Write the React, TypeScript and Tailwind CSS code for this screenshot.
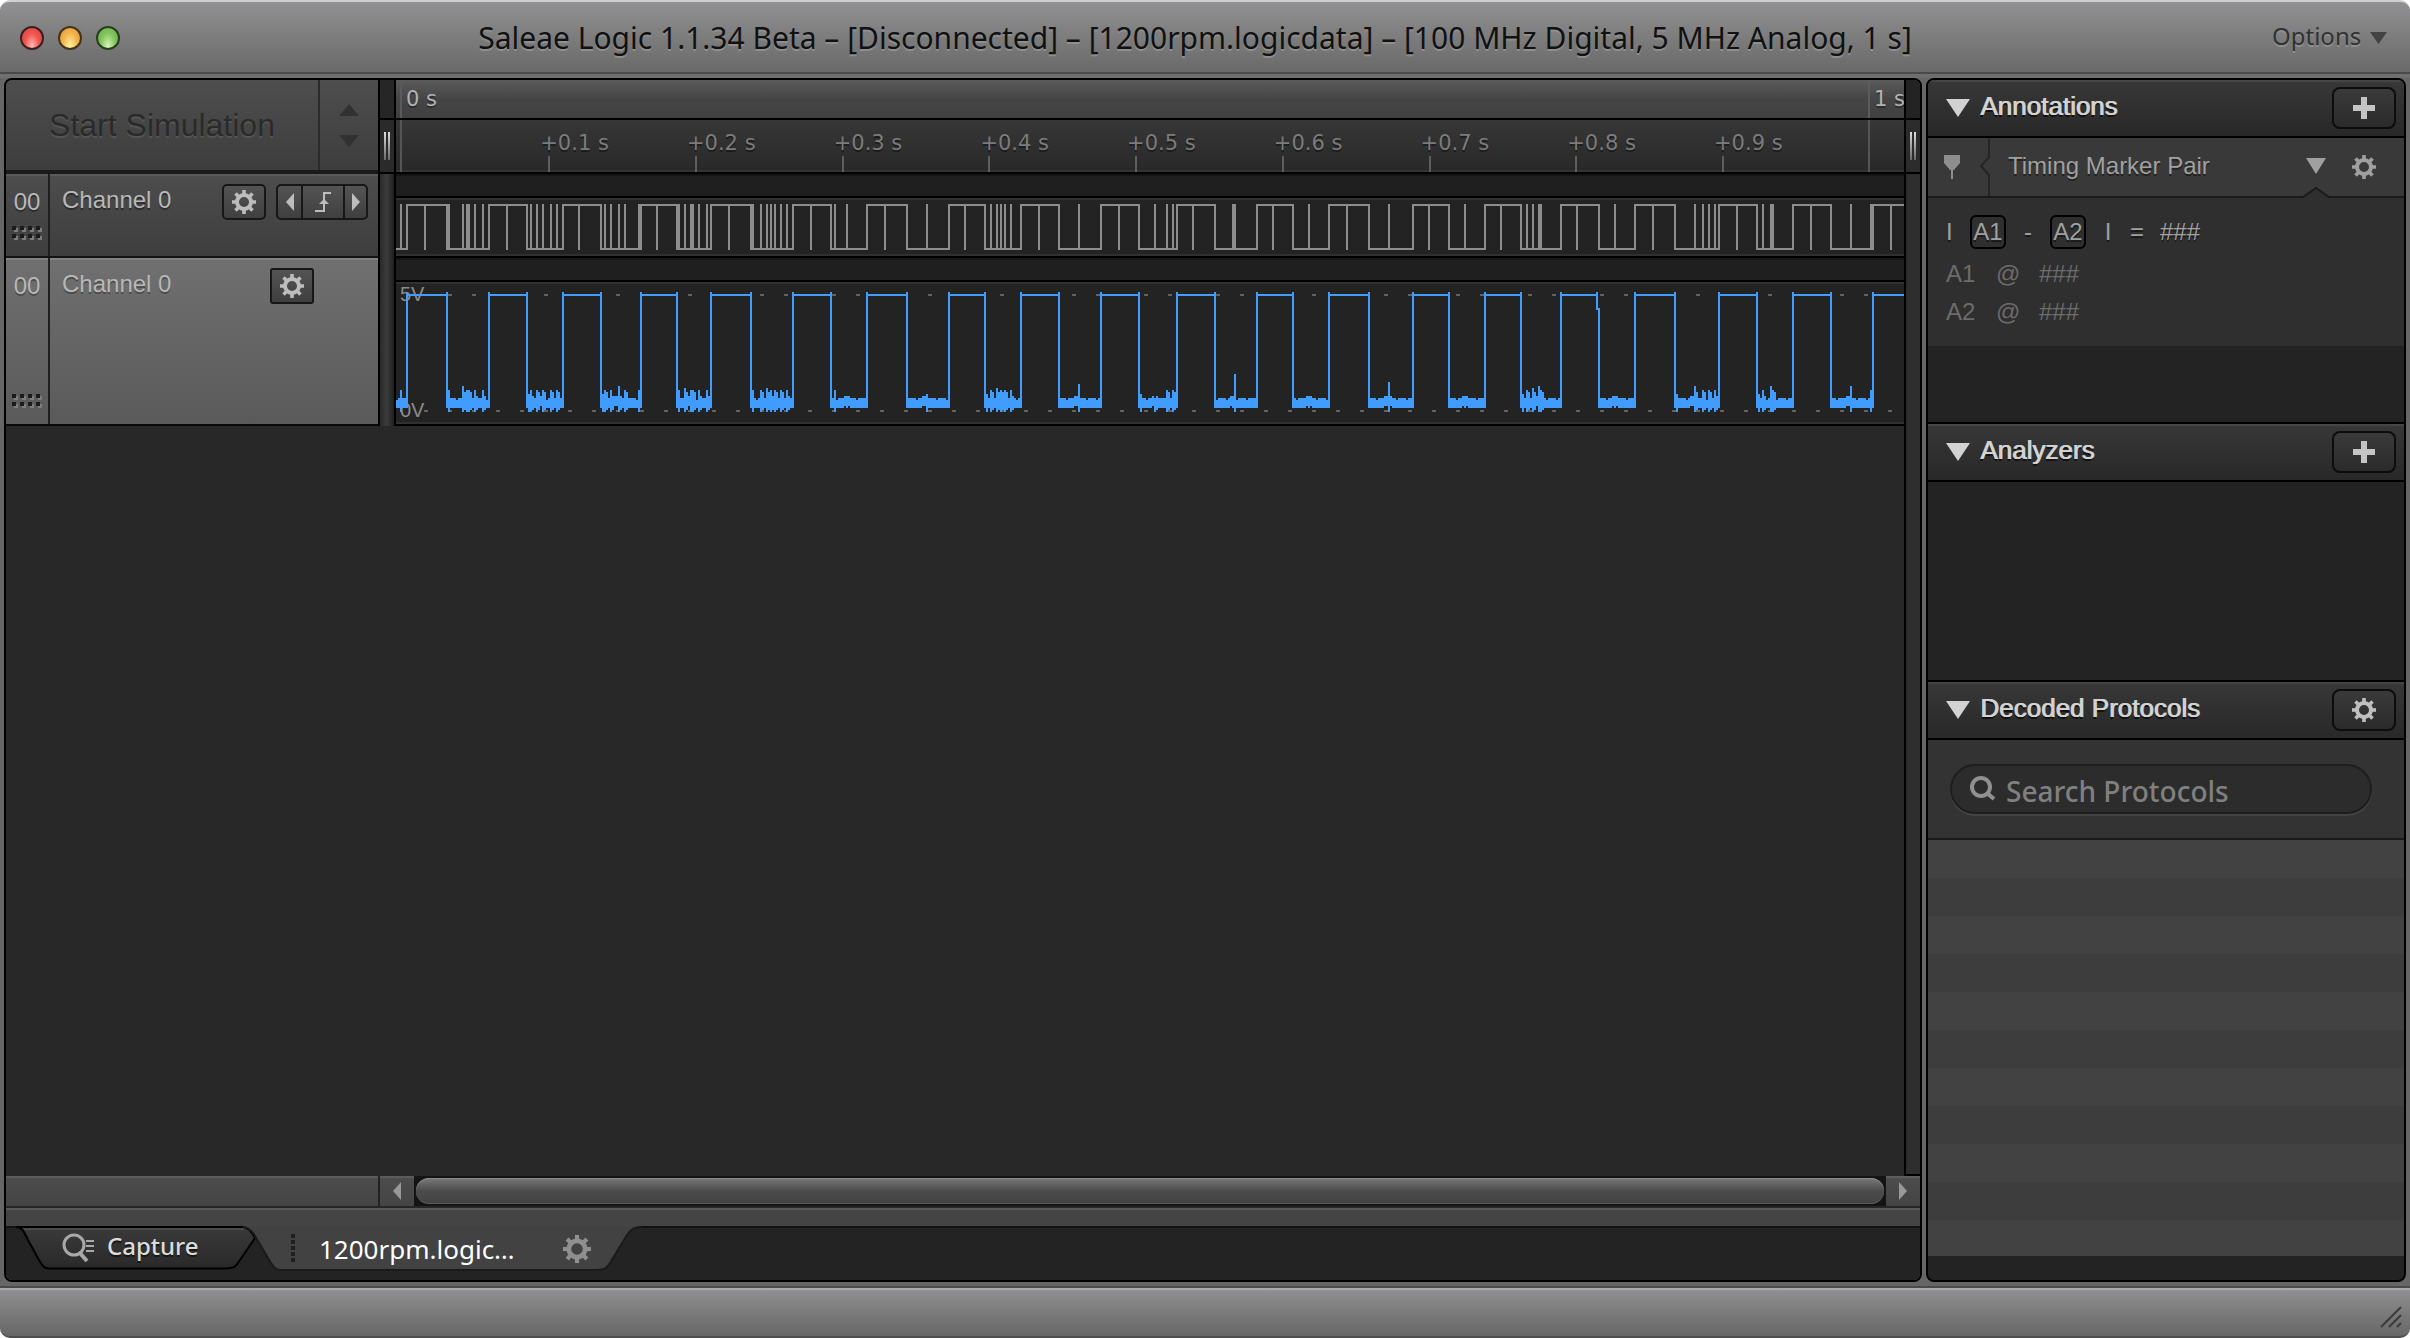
import React from 'react';

/* ---------- signal data, in samples along a 754-wide capture ---------- */

const CAPTURE_WIDTH = 754;

type Low = { fall: number; rise: number; spikes: number[]; edges?: number[] };

const LOWS: Low[] = [
  { fall: -1, rise: 5, spikes: [2] },
  { fall: 25, rise: 46, spikes: [33, 35, 36, 39, 43], edges: [26] },
  { fall: 65, rise: 83, spikes: [67, 70, 73, 77, 80] },
  { fall: 102, rise: 122, spikes: [104, 107, 111, 114], edges: [121] },
  { fall: 140, rise: 157, spikes: [144, 147, 148, 151, 155], edges: [141] },
  { fall: 177, rise: 198, spikes: [182, 185, 187, 189, 192, 195], edges: [178] },
  { fall: 217, rise: 235, spikes: [219, 225] },
  { fall: 255, rise: 276, spikes: [265] },
  { fall: 294, rise: 312, spikes: [297, 300, 302, 304, 307] },
  { fall: 331, rise: 352, spikes: [341] },
  { fall: 371, rise: 390, spikes: [379, 385, 388] },
  { fall: 409, rise: 430, spikes: [418, 419] },
  { fall: 448, rise: 466, spikes: [456] },
  { fall: 486, rise: 508, spikes: [496] },
  { fall: 526, rise: 544, spikes: [534] },
  { fall: 562, rise: 582, spikes: [565, 568, 571, 572] },
  { fall: 601, rise: 619, spikes: [609] },
  { fall: 639, rise: 661, spikes: [649, 653, 656, 659] },
  { fall: 680, rise: 698, spikes: [683, 687, 688] },
  { fall: 717, rise: 738, spikes: [727], edges: [737] },
];

const HIGH_PULSES = [
  14, 55, 91, 130, 166, 207, 244, 284, 321, 361, 398, 438, 475, 516, 552, 590, 628, 670, 707, 747,
];

/* Samples whose analog excursion differs from the usual burst height */
const PEAKS: Record<number, number> = {
  33: 52, 111: 52, 144: 53, 185: 53, 265: 56, 300: 53, 341: 51, 379: 58, 419: 46,
  418: 57, 456: 57, 496: 50, 534: 57, 568: 53, 571: 52, 609: 57, 649: 52, 687: 52, 727: 52, 225: 57,
};

const rect = (x: number, y: number, w: number, h: number) => `M${x} ${y}h${w}v${h}h${-w}z`;

function buildDigital() {
  let d = '';
  LOWS.forEach((low, i) => {
    const start = Math.max(low.fall, 0);
    d += rect(start, 25, low.rise - start + 1, 1);
    const next = LOWS[i + 1] ? LOWS[i + 1].fall : CAPTURE_WIDTH;
    d += rect(low.rise, 3, next - low.rise + 1, 1);
    const columns = [low.fall, low.rise, ...low.spikes, ...(low.edges ?? [])];
    columns.filter((c) => c >= 0).forEach((c) => (d += rect(c, 3, 1, 23)));
  });
  HIGH_PULSES.forEach((c) => (d += rect(c, 3, 1, 23)));
  return d;
}

function buildAnalog() {
  let d = '';
  LOWS.forEach((low, i) => {
    const next = LOWS[i + 1] ? LOWS[i + 1].fall : CAPTURE_WIDTH;
    d += rect(low.rise, 6, next - low.rise, 1);
    d += rect(low.rise, 5, 1, 58);
    if (low.fall === 601) {
      d += rect(600, 5, 1, 9) + rect(601, 13, 1, 50);
    } else if (low.fall >= 0) {
      d += rect(low.fall, 5, 1, 58);
    }
    const length = low.rise - low.fall;
    const burst = low.spikes.length > 2;
    for (let x = Math.max(low.fall, 0); x <= low.rise; x++) {
      const t = (x - low.fall) / length;
      const middle = t > 0.34 && t < 0.52;
      let top = middle ? 57 : (x * 7) % 5 === 0 ? 59 : 58;
      let bottom = middle ? 62 : 63;
      const hit = low.spikes.includes(x) || (low.edges ?? []).includes(x);
      const after = low.spikes.includes(x - 1);
      if (hit) {
        top = PEAKS[x] ?? 54;
        bottom = top < 57 || burst ? 65 : 63;
      } else if (after && burst) {
        top = (x * 3) % 4 === 0 ? 57 : 55;
        bottom = 64;
      } else if (burst && x === low.fall + 1) {
        top = 56;
        bottom = 65;
      }
      d += rect(x, top, 1, bottom - top);
    }
  });
  return d;
}

function buildDashes() {
  let d = '';
  for (let x = 14; x < CAPTURE_WIDTH; x += 12) d += rect(x, 6, 2, 1) + rect(x, 64, 2, 1);
  return d;
}

const DIGITAL = buildDigital();
const ANALOG = buildAnalog();
const DASHES = buildDashes();

/* ------------------------------- icons ------------------------------- */

function Gear({ className }: { className: string }) {
  return (
    <svg viewBox="0 0 24 24" className={className} fill="none" stroke="currentColor" aria-hidden="true">
      <circle cx="12" cy="12" r="7" strokeWidth="4" />
      {[0, 45, 90, 135, 180, 225, 270, 315].map((a) => (
        <path key={a} d="M12 4.5V0" strokeWidth="3.6" transform={`rotate(${a} 12 12)`} />
      ))}
    </svg>
  );
}

function Plus() {
  return (
    <svg viewBox="0 0 22 22" className="size-[22px] fill-[#c4c4c4]" aria-hidden="true">
      <path d="M8 0h6v8h8v6h-8v8H8v-8H0V8h8z" />
    </svg>
  );
}

function DownTriangle({ className }: { className: string }) {
  return (
    <svg viewBox="0 0 24 18" className={className} fill="currentColor" preserveAspectRatio="none" aria-hidden="true">
      <path d="M0 0h24L12 18z" />
    </svg>
  );
}

function DragDots() {
  const xs = [0, 8, 16, 24];
  return (
    <svg viewBox="0 0 30 14" className="h-[14px] w-[30px]" aria-hidden="true">
      {xs.flatMap((x) =>
        [0, 8].map((y) => (
          <g key={`${x}-${y}`}>
            <rect x={x + 2} y={y + 2} width="4" height="4" fill="#7c7c7c" />
            <rect x={x} y={y} width="4" height="4" fill="#1b1b1b" />
          </g>
        )),
      )}
    </svg>
  );
}

function Grip() {
  return (
    <div className="flex h-7 justify-center gap-[2px]">
      <div className="w-[2px] bg-linear-to-b from-[#e0e0e0] to-[#6a6a6a]" />
      <div className="w-[2px] bg-linear-to-b from-[#e0e0e0] to-[#6a6a6a]" />
    </div>
  );
}

/* ------------------------------ title bar ----------------------------- */

function TitleBar() {
  return (
    <header className="flex h-[78px] shrink-0 items-center rounded-t-[10px] border-t-2 border-[#cfcfcf] bg-linear-to-b from-[#919193] to-[#686868] to-95% shadow-[inset_0_-4px_0_#6f6f6f,inset_0_-6px_0_#4a4a4a]">
      <div className="flex w-[120px] shrink-0 gap-[14px] pb-1 pl-5">
        <button aria-label="Close" className="size-6 rounded-full border-2 border-[#3c2020] bg-radial-[at_50%_90%] from-[#ffb9b4] via-[#f25650] to-[#d8403c]" />
        <button aria-label="Minimize" className="size-6 rounded-full border-2 border-[#43331c] bg-radial-[at_50%_90%] from-[#fff3a0] via-[#f4b64e] to-[#dc9430]" />
        <button aria-label="Zoom" className="size-6 rounded-full border-2 border-[#25401c] bg-radial-[at_50%_90%] from-[#d5f7b4] via-[#86c662] to-[#65a847]" />
      </div>
      <h1 className="min-w-0 flex-1 pb-1 text-center font-['Noto_Sans',sans-serif] text-[30px] leading-9 text-[#111] [text-shadow:0_2px_0_#8f8f8f]">
        Saleae Logic 1.1.34 Beta – [Disconnected] – [1200rpm.logicdata] – [100 MHz Digital, 5 MHz Analog, 1 s]
      </h1>
      <button className="flex w-[140px] shrink-0 items-center gap-[9px] pb-2 pl-[2px] font-['Noto_Sans',sans-serif] text-2xl leading-8 text-[#323232] [text-shadow:0_2px_0_#8f8f8f]">
        Options
        <DownTriangle className="mt-1 h-3 w-[17px] text-[#424242]" />
      </button>
    </header>
  );
}

/* ---------------------------- channel panels -------------------------- */

const iconButton =
  'flex h-9 items-center justify-center border-2 border-[#171717] bg-linear-to-b from-[#545454] to-[#3f3f3f] text-[#bdbdbd]';

function StartPanel() {
  return (
    <div className="flex h-[94px] border-b-4 border-[#1a1a1a] bg-linear-to-b from-[#4e4e4e] to-[#3d3d3d]">
      <button disabled className="flex-1 text-[32px] text-[#2a2a2a] [text-shadow:0_2px_0_#555]">
        Start Simulation
      </button>
      <div className="flex w-[60px] flex-col items-center justify-center gap-[19px] border-l-2 border-[#2b2b2b] text-[#313131]">
        <button aria-label="Increase">
          <DownTriangle className="h-3 w-5 rotate-180" />
        </button>
        <button aria-label="Decrease">
          <DownTriangle className="h-3 w-5" />
        </button>
      </div>
    </div>
  );
}

function DigitalChannel() {
  return (
    <div className="flex h-[84px] border-b-2 border-[#141414] bg-linear-to-b from-[#4d4d4d] to-[#3e3e3e] text-2xl text-[#b8b8b8] shadow-[inset_0_2px_0_#5a5a5a] [text-shadow:0_2px_0_#2c2c2c]">
      <div className="flex w-11 flex-col items-center justify-between border-r-2 border-[#1f1f1f] pt-[14px] pb-4 leading-7">
        00
        <DragDots />
      </div>
      <div className="flex flex-1 items-start pr-[10px] pl-3">
        <span className="flex-1 pt-[12px] leading-7">Channel 0</span>
        <button aria-label="Channel settings" className={`${iconButton} mt-[10px] mr-[10px] w-11 rounded-[5px]`}>
          <Gear className="size-6" />
        </button>
        <div className="mt-[10px] flex">
          <button aria-label="Previous edge" className={`${iconButton} w-[27px] rounded-l-[5px]`}>
            <svg viewBox="0 0 8 18" className="h-[18px] w-2" fill="currentColor"><path d="M8 0v18L0 9z" /></svg>
          </button>
          <button aria-label="Rising edge" className={`${iconButton} w-10 border-x-0`}>
            <svg viewBox="0 0 16 20" className="h-5 w-4" fill="none" stroke="currentColor" strokeWidth="2">
              <path d="M0 19h9V1h7" />
              <path d="M9 7l5 5H4z" fill="currentColor" stroke="none" />
            </svg>
          </button>
          <button aria-label="Next edge" className={`${iconButton} w-[25px] rounded-r-[5px]`}>
            <svg viewBox="0 0 8 18" className="h-[18px] w-2" fill="currentColor"><path d="M0 0v18l8-9z" /></svg>
          </button>
        </div>
      </div>
    </div>
  );
}

function AnalogChannel() {
  return (
    <div className="flex h-[168px] border-b-2 border-[#0a0a0a] bg-linear-to-b from-[#707070] to-[#5a5a5a] text-2xl text-[#b8b8b8] shadow-[inset_0_2px_0_#838383] [text-shadow:0_2px_0_#4c4c4c]">
      <div className="flex w-11 flex-col items-center justify-between border-r-2 border-[#1f1f1f] pt-[14px] pb-4 leading-7">
        00
        <DragDots />
      </div>
      <div className="flex flex-1 items-start pr-16 pl-3">
        <span className="flex-1 pt-[12px] leading-7">Channel 0</span>
        <button aria-label="Channel settings" className={`${iconButton} mt-[10px] w-11 rounded-[3px]`}>
          <Gear className="size-6" />
        </button>
      </div>
    </div>
  );
}

/* ------------------------------- canvas ------------------------------- */

const TENTHS = [1, 2, 3, 4, 5, 6, 7, 8, 9];

function Ruler() {
  return (
    <div className="h-[94px] border-b-2 border-black font-['DejaVu_Sans',sans-serif] text-[21px] leading-6">
      <div className="flex h-10 justify-between border-b-2 border-black bg-linear-to-b from-[#5b5b5b] via-[#454545] to-[#404040] text-[#b2b2b2] [text-shadow:0_2px_0_#2d2d2d]">
        <span className="ml-1 border-l-2 border-[#5a5a5a] pt-[7px] pl-1">0 s</span>
        <span className="w-9 overflow-hidden border-l-2 border-[#5c5c5c] pt-[7px] pl-1 whitespace-nowrap">1 s</span>
      </div>
      <div className="flex h-[52px] bg-linear-to-b from-[#373737] to-[#282828] text-[#7b7b7b] shadow-[inset_0_-2px_0_#323232] [text-shadow:0_2px_0_#1c1c1c]">
        <div className="ml-1 w-[9.3%] border-l-2 border-[#555]" />
        {TENTHS.map((n) => (
          <div key={n} className="flex w-[9.73%] flex-col justify-between whitespace-nowrap">
            <span className="pt-[11px]">+0.{n} s</span>
            <span className="ml-2 h-4 w-[2px] bg-[#5e5e5e]" />
          </div>
        ))}
        <div className="ml-auto w-9 shrink-0 border-l-2 border-[#555]" />
      </div>
    </div>
  );
}

function Canvas() {
  return (
    <div className="min-w-0 flex-1 bg-[#232323]">
      <Ruler />
      <div className="h-6 border-t-2 border-b-2 border-t-[#151515] border-b-black bg-[#1f1f1f]" />
      <div className="h-[60px] border-t-2 border-b-2 border-t-[#303030] border-b-black shadow-[inset_0_-2px_0_#303030]">
        <svg viewBox="0 1 754 28" preserveAspectRatio="none" shapeRendering="crispEdges" className="block h-14 w-full">
          <path d={DIGITAL} fill="#8d8d8d" />
        </svg>
      </div>
      <div className="h-6 border-t-2 border-b-2 border-t-[#151515] border-b-black bg-[#1f1f1f]" />
      <div className="relative h-[144px] border-t-2 border-b-2 border-t-[#303030] border-b-black shadow-[inset_0_-2px_0_#303030]">
        <div className="flex h-full flex-col justify-between pb-1 pl-1 text-xl leading-5 text-[#8b8b8b]">
          <span>5V</span>
          <span>0V</span>
        </div>
        <svg viewBox="0 1 754 70" preserveAspectRatio="none" shapeRendering="crispEdges" className="absolute inset-0 h-full w-full">
          <path d={DASHES} fill="#626262" />
          <path d={ANALOG} fill="#419cff" />
        </svg>
      </div>
    </div>
  );
}

function Workspace() {
  return (
    <div className="flex flex-1">
      <div className="flex min-w-0 flex-1 flex-col bg-[#282828]">
        <div className="flex">
          <div className="w-[372px] shrink-0">
            <StartPanel />
            <DigitalChannel />
            <AnalogChannel />
          </div>
          <div className="w-[18px] shrink-0 border-x-2 border-black bg-linear-to-r from-[#2a2a2a] via-[#3c3c3c] to-[#1f1f1f]">
            <div className="h-10 border-b-2 border-black bg-[#262626]" />
            <div className="h-[54px] border-b-2 border-black bg-[#2a2a2a] pt-3">
              <Grip />
            </div>
          </div>
          <Canvas />
        </div>
        <div className="flex-1" />
      </div>
      <div className="w-4 shrink-0 border-b-2 border-l-2 border-black bg-[#2e2e2e]">
        <div className="h-10 rounded-tr-md border-b-2 border-black bg-[#232323]" />
        <div className="h-[54px] border-b-2 border-black bg-[#2c2c2c] pt-3">
          <Grip />
        </div>
      </div>
    </div>
  );
}

/* ----------------------------- bottom bars ---------------------------- */

function ScrollRow() {
  return (
    <div className="flex h-8 border-b-2 border-[#262626] bg-linear-to-b from-[#4d4d4d] to-[#444] shadow-[inset_0_2px_0_#5c5c5c]">
      <div className="w-[372px] shrink-0" />
      <button aria-label="Scroll left" className="flex w-9 shrink-0 items-center justify-center border-l-2 border-[#222] text-[#999]">
        <svg viewBox="0 0 8 18" className="h-[18px] w-2" fill="currentColor"><path d="M8 0v18L0 9z" /></svg>
      </button>
      <div className="flex-1 bg-[#141414] px-[2px] py-[2px]">
        <div className="h-[26px] rounded-full bg-linear-to-b from-[#7a7a7a] via-[#4c4c4c] to-[#424242] shadow-[inset_0_1px_0_#8a8a8a,inset_0_-1px_0_#5a5a5a]" />
      </div>
      <button aria-label="Scroll right" className="flex w-[34px] shrink-0 items-center justify-center text-[#999]">
        <svg viewBox="0 0 8 18" className="h-[18px] w-2" fill="currentColor"><path d="M0 0v18l8-9z" /></svg>
      </button>
    </div>
  );
}

function TabBar() {
  return (
    <nav className="flex h-[54px] items-start border-t-2 border-[#121212] bg-[#232323] font-['Noto_Sans',sans-serif]">
      <button className="relative -mt-[2px] ml-[10px] flex h-[46px] w-60 items-center gap-[13px] pb-[6px] pl-[46px] text-2xl font-medium text-[#dcdcdc] [text-shadow:0_2px_0_#151515]">
        <svg viewBox="0 0 240 46" className="absolute inset-0 h-full w-full" aria-hidden="true">
          <defs>
            <linearGradient id="tab" x1="0" y1="0" x2="0" y2="1">
              <stop offset="0" stopColor="#3a3a3a" />
              <stop offset="1" stopColor="#292929" />
            </linearGradient>
          </defs>
          <path d="M-10 1H0C7 1 9 8 12 14L23 34C27 41 29 42.500 33 42.500H210C217 42.500 220 41 224 34L239 12C236 6 232 1 226 1z" fill="url(#tab)" stroke="#000" strokeWidth="2" />
          <path d="M8 3H228" stroke="#4c4c4c" strokeWidth="2" />
        </svg>
        <svg viewBox="0 0 32 30" className="relative mt-1 h-[30px] w-8" fill="none" stroke="#a8a8a8" aria-hidden="true">
          <circle cx="12" cy="12" r="10" strokeWidth="3" />
          <path d="M17 19l8 9" strokeWidth="4" />
          <path d="M24 8h8M24 13h8M24 18h8" strokeWidth="2" />
        </svg>
        <span className="relative">Capture</span>
      </button>
      <div className="relative -mt-[2px] -ml-[13px] flex h-[46px] w-[400px] items-center pl-12 text-[26px] text-white">
        <svg viewBox="0 0 400 46" className="absolute inset-0 h-full w-full" aria-hidden="true">
          <path d="M-8 0C8 0 11 8 15 15L28 37C32 43 34 44 38 44H354C361 44 363 43 367 37L384 9C388 3 391 1 399 0z" fill="#424242" />
          <path d="M0 1C8 2 11 8 15 15L28 37C32 43 34 44 38 44H354C361 44 363 43 367 37L384 9C388 3 391 1 399 1" fill="none" stroke="#1a1a1a" strokeWidth="2" />
        </svg>
        <svg viewBox="0 0 6 30" className="relative mr-[22px] h-[30px] w-[6px]" fill="#1f1f1f" aria-hidden="true">
          {[0, 6, 12, 18, 24].map((y) => (
            <rect key={y} x="0" y={y} width="4" height="4" />
          ))}
        </svg>
        <button className="relative w-[244px] text-left">1200rpm.logic…</button>
        <button aria-label="Tab settings" className="relative text-[#8f8f8f]">
          <Gear className="size-7" />
        </button>
      </div>
    </nav>
  );
}

/* ------------------------------- sidebar ------------------------------ */

function SectionHeader({ title, action, children }: { title: string; action: string; children: React.ReactNode }) {
  return (
    <div className="flex h-[58px] shrink-0 items-center border-b-2 border-black bg-linear-to-b from-[#383838] to-[#282828] pr-2 pl-[18px] shadow-[inset_0_2px_0_#454545]">
      <button className="flex flex-1 items-center gap-[10px] text-left text-[26px] leading-8 text-[#d2d2d2] [text-shadow:1px_0_0_#d2d2d2,0_2px_0_#111]">
        <DownTriangle className="h-[18px] w-6" />
        <span className="pb-1">{title}</span>
      </button>
      <button aria-label={action} className="flex h-[42px] w-16 items-center justify-center rounded-lg border-2 border-[#0c0c0c] bg-linear-to-b from-[#3a3a3a] to-[#2b2b2b] text-[#c0c0c0]">
        {children}
      </button>
    </div>
  );
}

function Annotations() {
  return (
    <section className="h-[344px] shrink-0 border-b-2 border-black bg-[#232323]">
      <SectionHeader title="Annotations" action="Add annotation">
        <Plus />
      </SectionHeader>
      <div className="relative flex h-[60px] items-center border-b-2 border-[#1a1a1a] bg-[#393939] text-2xl text-[#a0a0a0]">
        <svg viewBox="0 0 16 24" className="ml-4 h-6 w-4" fill="#8e8e8e" aria-hidden="true">
          <path d="M0 0h16v8l-6 7H6L0 8z" />
          <path d="M7 14h2v10H7z" />
        </svg>
        <svg viewBox="0 0 12 58" className="ml-[19px] h-[58px] w-3" fill="none" stroke="#252525" strokeWidth="2" aria-hidden="true">
          <path d="M10 0v19l-8 9 8 9v21" />
        </svg>
        <button className="ml-[17px] flex flex-1 items-center justify-between pr-[26px] pb-[2px] text-left [text-shadow:0_2px_0_#222]">
          Timing Marker Pair
          <DownTriangle className="h-4 w-5" />
        </button>
        <button aria-label="Marker settings" className="mr-7">
          <Gear className="size-6" />
        </button>
        <svg viewBox="0 0 32 12" className="absolute right-[72px] -bottom-[2px] h-3 w-8" aria-hidden="true">
          <path d="M0 11h4L16 2l12 9h4v1H0z" fill="#2f2f2f" />
          <path d="M0 11h3L16 2l13 9h3" fill="none" stroke="#1a1a1a" strokeWidth="2" />
        </svg>
      </div>
      <div className="h-[148px] bg-[#2f2f2f] pt-[15px] pl-[18px] text-2xl text-[#6c6c6c]">
        <div className="flex h-[38px] items-center text-[#a0a0a0] [text-shadow:0_2px_0_#1a1a1a]">
          <span className="w-6">I</span>
          <span className="flex h-[34px] w-9 items-center justify-center rounded-md border-2 border-black">A1</span>
          <span className="w-11 text-center">-</span>
          <span className="flex h-[34px] w-9 items-center justify-center rounded-md border-2 border-black">A2</span>
          <span className="w-11 text-center">I</span>
          <span>=</span>
          <span className="ml-4">###</span>
        </div>
        <div className="mt-1 grid h-[76px] grid-cols-[50px_43px_1fr] items-center">
          <span>A1</span>
          <span>@</span>
          <span>###</span>
          <span>A2</span>
          <span>@</span>
          <span>###</span>
        </div>
      </div>
    </section>
  );
}

function Sidebar() {
  return (
    <aside className="flex w-[480px] shrink-0 flex-col overflow-hidden rounded-lg border-2 border-black bg-[#232323]">
      <Annotations />
      <section className="h-[258px] shrink-0 border-b-2 border-black">
        <SectionHeader title="Analyzers" action="Add analyzer">
          <Plus />
        </SectionHeader>
      </section>
      <section className="flex flex-1 flex-col">
        <SectionHeader title="Decoded Protocols" action="Protocol settings">
          <Gear className="size-6" />
        </SectionHeader>
        <div className="h-[100px] shrink-0 border-b-2 border-[#191919] bg-[#333] pt-6 pl-[22px]">
          <label className="flex h-[50px] w-[422px] items-center gap-[10px] rounded-full border-2 border-[#1e1e1e] bg-[#2c2c2c] pl-[18px] shadow-[0_2px_0_#434343]">
            <svg viewBox="0 0 26 26" className="size-[26px] shrink-0" fill="none" stroke="#909090" aria-hidden="true">
              <circle cx="11" cy="11" r="9" strokeWidth="4" />
              <path d="M17 17l7 6" strokeWidth="4" />
            </svg>
            <input
              type="search"
              aria-label="Search Protocols"
              placeholder="Search Protocols"
              className="w-full min-w-0 bg-transparent pt-1 font-['Noto_Sans',sans-serif] text-[28px] leading-9 font-medium outline-none placeholder:text-[#808080]"
            />
          </label>
        </div>
        <div className="mb-6 flex-1 bg-[repeating-linear-gradient(to_bottom,#424242_0_38px,#3d3d3d_38px_76px)]" />
      </section>
    </aside>
  );
}

/* -------------------------------- window ------------------------------ */

export default function App() {
  return (
    <div className="flex min-h-screen flex-col bg-white font-['Liberation_Sans',Arial,sans-serif]">
      <TitleBar />
      <div className="flex flex-1 gap-1 bg-[#666] px-1 pb-1">
        <main className="flex min-w-0 flex-1 flex-col overflow-hidden rounded-lg border-2 border-black">
          <Workspace />
          <ScrollRow />
          <div className="h-[18px] bg-[#444] shadow-[inset_0_2px_0_#585858]" />
          <TabBar />
        </main>
        <Sidebar />
      </div>
      <div className="bg-white">
        <footer className="flex h-[52px] shrink-0 items-end justify-end rounded-b-[10px] border-t-2 border-b-2 border-t-[#4a4a4a] border-b-[#4e4e4e] bg-linear-to-b from-[#919193] to-[#676767] pr-2 pb-2 shadow-[inset_0_2px_0_#a9a9a9]">
          <svg viewBox="0 0 22 22" className="size-[22px]" stroke="#3a3a3a" strokeWidth="2" aria-hidden="true">
            <path d="M1 21L21 1M9 21L21 9M17 21l4-4" />
          </svg>
        </footer>
      </div>
    </div>
  );
}
